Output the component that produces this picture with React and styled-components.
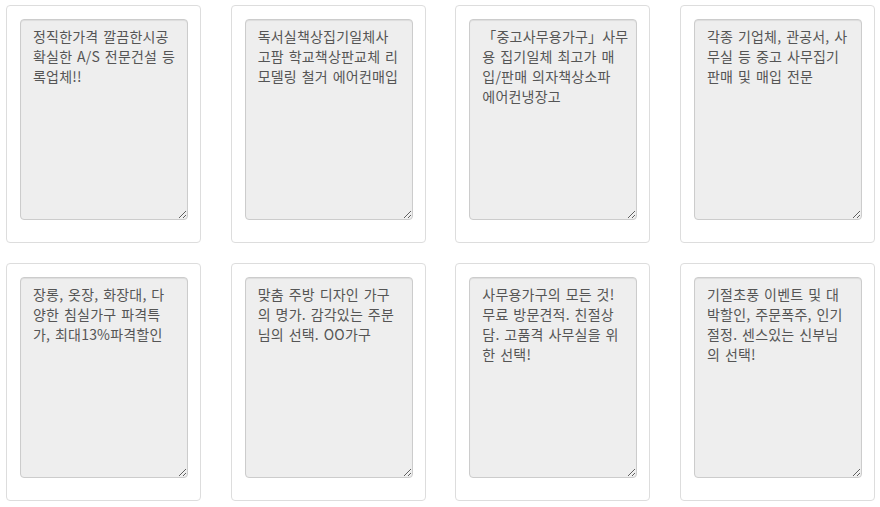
import React from "react";
import styled, { createGlobalStyle } from "styled-components";

const Global = createGlobalStyle`
  html, body { margin: 0; padding: 0; background: #fff; }
  body { font-family: "Noto Sans CJK KR", "Noto Sans", sans-serif; }
`;

const Grid = styled.div`
  display: grid;
  grid-template-columns: repeat(4, 195px);
  column-gap: 29.67px;
  row-gap: 20px;
  padding: 5px 0 0 6px;
`;

const Card = styled.div`
  box-sizing: border-box;
  width: 195px;
  height: 238px;
  padding: 13px 12px 22px 13px;
  border: 1px solid #ddd;
  border-radius: 4px;
  background: #fff;
`;

const Memo = styled.textarea`
  display: block;
  box-sizing: border-box;
  width: 168px;
  height: 201px;
  margin: 0;
  padding: 6px 12px;
  border: 1px solid #ccc;
  border-radius: 4px;
  background: #eee;
  box-shadow: inset 0 1px 1px rgba(0, 0, 0, 0.075);
  color: #555;
  font-family: "Noto Sans CJK KR", "Noto Sans", sans-serif;
  font-size: 14px;
  line-height: 20px;
  letter-spacing: 0.2px;
  word-spacing: 1.5px;
  white-space: pre;
  overflow: hidden;
  resize: vertical;
  outline: none;
`;

const items = [
  "정직한가격 깔끔한시공\n확실한 A/S 전문건설 등\n록업체!!",
  "독서실책상집기일체사\n고팜 학교책상판교체 리\n모델링 철거 에어컨매입",
  "「중고사무용가구」사무\n용 집기일체 최고가 매\n입/판매 의자책상소파\n에어컨냉장고",
  "각종 기업체, 관공서, 사\n무실 등 중고 사무집기\n판매 및 매입 전문",
  "장롱, 옷장, 화장대, 다\n양한 침실가구 파격특\n가, 최대13%파격할인",
  "맞춤 주방 디자인 가구\n의 명가. 감각있는 주분\n님의 선택. OO가구",
  "사무용가구의 모든 것!\n무료 방문견적. 친절상\n담. 고품격 사무실을 위\n한 선택!",
  "기절초풍 이벤트 및 대\n박할인, 주문폭주, 인기\n절정. 센스있는 신부님\n의 선택!",
];

export default function App() {
  return (
    <>
      <Global />
      <Grid>
        {items.map((t, i) => (
          <Card key={i}>
            <Memo readOnly value={t} />
          </Card>
        ))}
      </Grid>
    </>
  );
}
